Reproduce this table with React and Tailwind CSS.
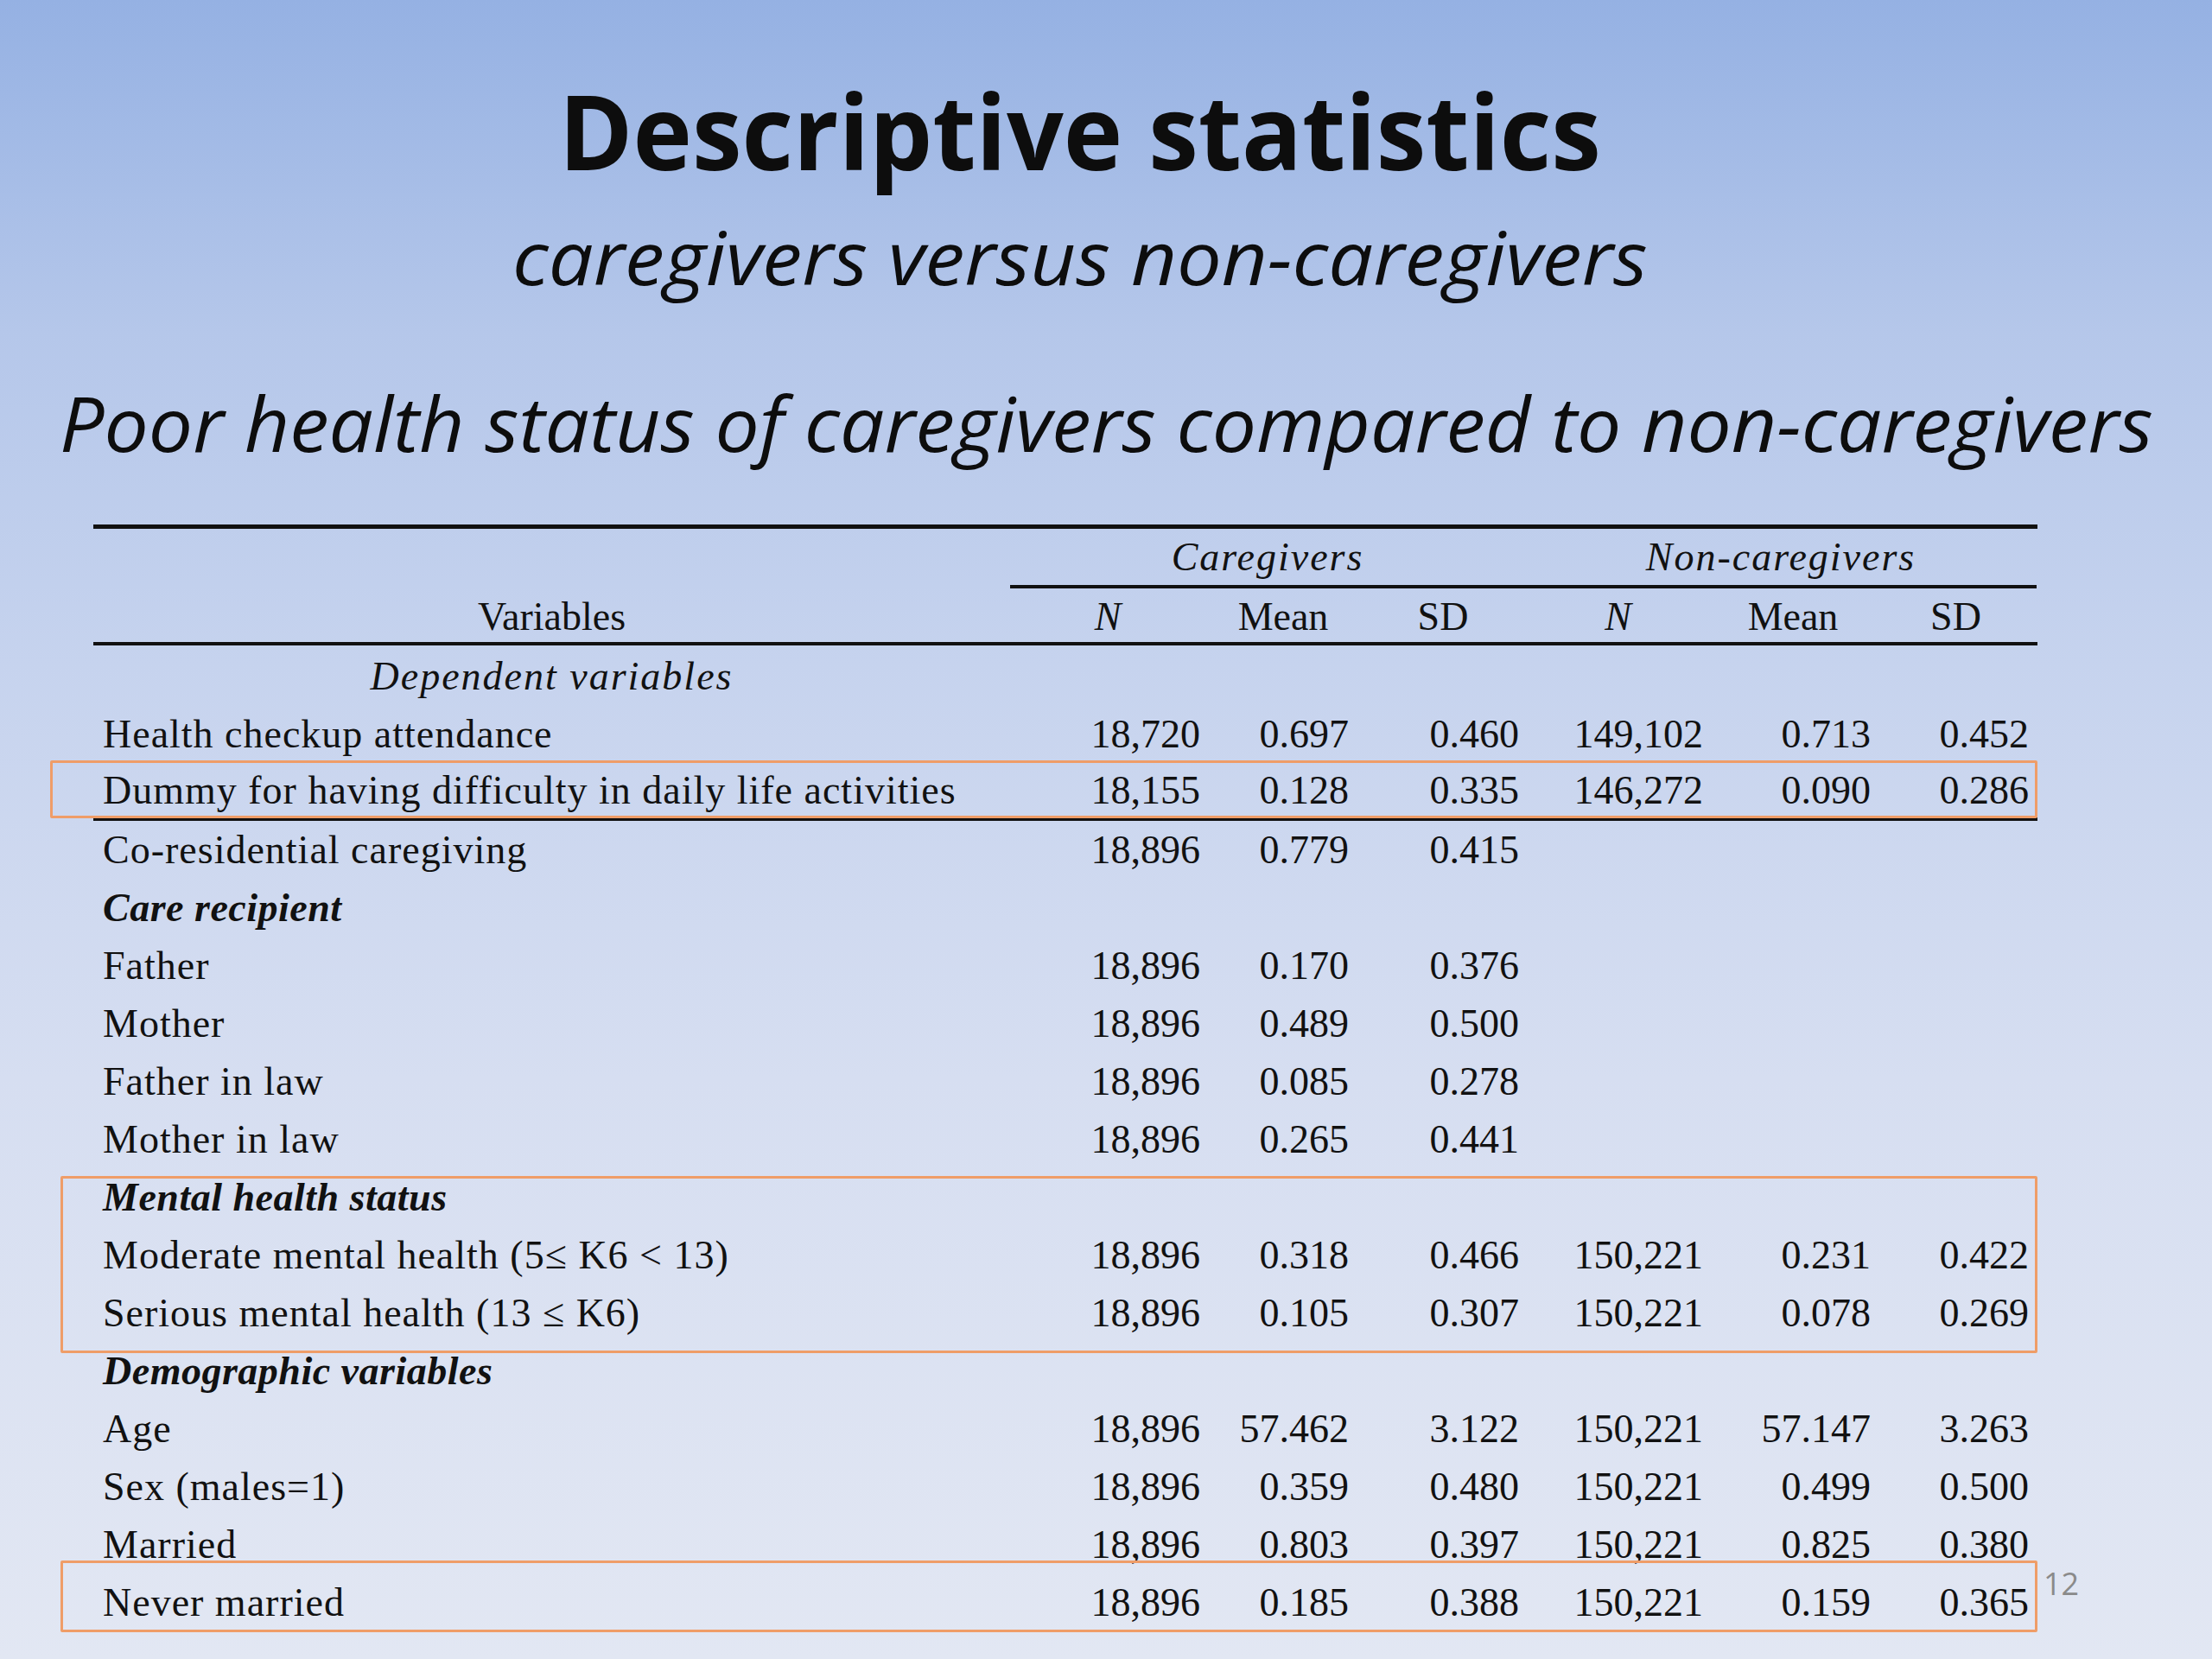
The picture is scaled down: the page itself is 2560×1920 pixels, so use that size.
import React from "react";

const GRID = "grid grid-cols-[1061px_226px_180px_190px_215px_190px_187px]";
const PADS = ["pr-[6px]", "pr-[14px]", "pr-[7px]", "pr-[9px]", "pr-[5px]", "pr-[9px]"];

const rows = [
  { type: "center", label: "Dependent variables" },
  { label: "Health checkup attendance", v: ["18,720", "0.697", "0.460", "149,102", "0.713", "0.452"] },
  { label: "Dummy for having difficulty in daily life activities", v: ["18,155", "0.128", "0.335", "146,272", "0.090", "0.286"], rule: true },
  { label: "Co-residential caregiving", v: ["18,896", "0.779", "0.415", "", "", ""] },
  { type: "section", label: "Care recipient" },
  { label: "Father", v: ["18,896", "0.170", "0.376", "", "", ""] },
  { label: "Mother", v: ["18,896", "0.489", "0.500", "", "", ""] },
  { label: "Father in law", v: ["18,896", "0.085", "0.278", "", "", ""] },
  { label: "Mother in law", v: ["18,896", "0.265", "0.441", "", "", ""] },
  { type: "section", label: "Mental health status" },
  { label: "Moderate mental health (5\u2264 K6 < 13)", v: ["18,896", "0.318", "0.466", "150,221", "0.231", "0.422"] },
  { label: "Serious mental health (13 \u2264 K6)", v: ["18,896", "0.105", "0.307", "150,221", "0.078", "0.269"] },
  { type: "section", label: "Demographic variables" },
  { label: "Age", v: ["18,896", "57.462", "3.122", "150,221", "57.147", "3.263"] },
  { label: "Sex (males=1)", v: ["18,896", "0.359", "0.480", "150,221", "0.499", "0.500"] },
  { label: "Married", v: ["18,896", "0.803", "0.397", "150,221", "0.825", "0.380"] },
  { label: "Never married", v: ["18,896", "0.185", "0.388", "150,221", "0.159", "0.365"] },
];

function Row({ r }) {
  if (r.type === "center") {
    return (
      <div className={`${GRID} h-[67px] leading-[67px]`}>
        <div className="text-center italic tracking-[2px]">{r.label}</div>
      </div>
    );
  }
  if (r.type === "section") {
    return (
      <div className={`${GRID} h-[67px] leading-[67px]`}>
        <div className="pl-[11px] font-bold italic tracking-[0.5px]">{r.label}</div>
      </div>
    );
  }
  return (
    <div
      className={`${GRID} h-[67px] ${r.rule ? "leading-[63px] border-b-4 border-[#111]" : "leading-[67px]"}`}
    >
      <div className="pl-[11px] whitespace-nowrap tracking-[1px]">{r.label}</div>
      {r.v.map((x, i) => (
        <div key={i} className={`text-right ${PADS[i]}`}>
          {x}
        </div>
      ))}
    </div>
  );
}

export default function App() {
  return (
    <div className="relative w-[2560px] h-[1920px] overflow-hidden bg-[linear-gradient(180deg,#95b1e3_0%,#b5c7ea_20%,#c6d3ee_40%,#d6def1_65%,#e2e7f3_100%)] text-[#0d0d0d]">
      <div className="pr-[60px] pt-[91px] flex flex-col items-center font-['Open_Sans',sans-serif]">
        <div className="text-[120px] leading-[120px] font-bold whitespace-nowrap scale-x-[0.965]">Descriptive statistics</div>
        <div className="mt-[44px] text-[86px] leading-[84px] italic whitespace-nowrap scale-x-[1.07]">caregivers versus non-caregivers</div>
      </div>
      <div className="mt-[106px] flex justify-center font-['Open_Sans',sans-serif]">
        <div className="text-[88px] leading-[88px] italic whitespace-nowrap scale-x-[1.035]">
          Poor health status of caregivers compared to non-caregivers
        </div>
      </div>

      <div className="relative mt-[74px] ml-[108px] w-[2250px] font-['Liberation_Serif','Times_New_Roman',serif] text-[46px] text-[#111]">
        <div className="border-t-[5px] border-[#111]" />
        <div className={`${GRID} h-[65px] leading-[65px]`}>
          <div />
          <div className="col-span-3 text-center italic tracking-[2px]">Caregivers</div>
          <div className="col-span-3 text-center italic tracking-[2px]">Non-caregivers</div>
        </div>
        <div className={GRID}>
          <div />
          <div className="col-span-6 border-t-4 border-[#111]" />
        </div>
        <div className={`${GRID} h-[62px] leading-[66px]`}>
          <div className="text-center">Variables</div>
          <div className="text-center italic">N</div>
          <div className="text-center">Mean</div>
          <div className="text-center">SD</div>
          <div className="text-center italic">N</div>
          <div className="text-center">Mean</div>
          <div className="text-center">SD</div>
        </div>
        <div className="border-t-4 border-[#111] mb-[2px]" />
        {rows.map((r, i) => (
          <Row key={i} r={r} />
        ))}

        <div className="absolute left-[-50px] top-[273px] w-[2300px] h-[67px] border-[3px] border-[#ef9d68] rounded-[2px] pointer-events-none" />
        <div className="absolute left-[-38px] top-[754px] w-[2288px] h-[205px] border-[3px] border-[#ef9d68] rounded-[2px] pointer-events-none" />
        <div className="absolute left-[-38px] top-[1199px] w-[2288px] h-[83px] border-[3px] border-[#ef9d68] rounded-[2px] pointer-events-none" />
      </div>

      <div className="absolute left-[2365px] top-[1809px] text-[36px] leading-[48px] text-[#8a8a8a] font-['Open_Sans',sans-serif]">
        12
      </div>
    </div>
  );
}
